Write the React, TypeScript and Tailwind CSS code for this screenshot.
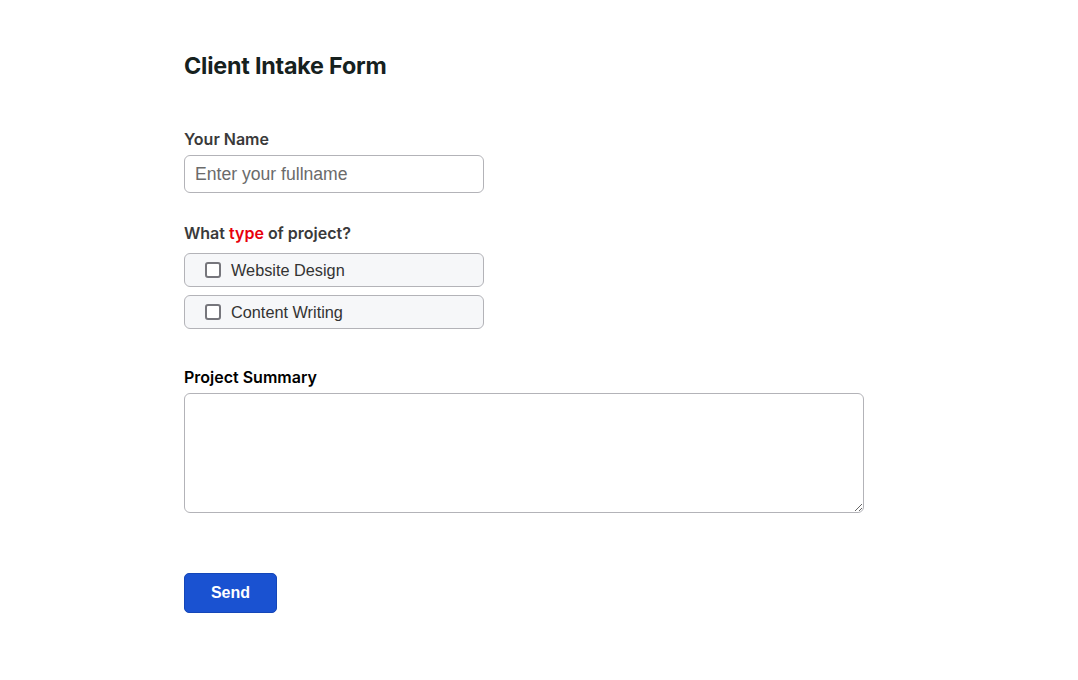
export default function App() {
  return (
    <div className="min-h-screen bg-white font-['Inter',sans-serif]">
      <form className="pl-[184px] pt-[51px] flex flex-col" onSubmit={(e) => e.preventDefault()}>
        <h1 className="text-[23.3px] leading-[30px] font-bold text-[#16211e] tracking-[-0.2px]">Client Intake Form</h1>

        <label className="mt-[48px] text-[16px] leading-[20px] font-semibold text-[#3a3a3a]">Your Name</label>
        <input
          type="text"
          placeholder="Enter your fullname"
          className="mt-[6px] w-[300px] h-[38px] rounded-[6px] border border-[#b3b3b8] px-[10px] text-[17.6px] font-['Liberation_Sans',sans-serif] text-[#333] placeholder:text-[#6b6b6b] outline-none"
        />

        <p className="mt-[30px] text-[16px] leading-[20px] font-semibold text-[#3a3a3a]">
          What <span className="text-[#e8000b]">type</span> of project?
        </p>
        <div className="mt-[10px] flex flex-col gap-[8px]">
          {['Website Design', 'Content Writing'].map((t) => (
            <label
              key={t}
              className="w-[300px] h-[34px] rounded-[6px] border border-[#b3b3b8] bg-[#f6f7f9] flex items-center pl-[20px] gap-[10px] font-['Liberation_Sans',sans-serif] text-[16.3px] text-[#333]"
            >
              <span className="w-[16px] h-[16px] rounded-[3px] border-2 border-[#76767c] bg-white" />
              {t}
            </label>
          ))}
        </div>

        <label className="mt-[38px] text-[16px] leading-[20px] font-semibold text-black">Project Summary</label>
        <textarea className="mt-[6px] w-[680px] h-[120px] rounded-[6px] border border-[#b3b3b8] outline-none p-2" />

        <div className="mt-[60px]">
          <button
            type="submit"
            className="w-[93px] h-[40px] rounded-[5px] bg-[#1a52d1] border border-[#1446b8] text-white text-[16px] font-bold font-['Liberation_Sans',sans-serif]"
          >
            Send
          </button>
        </div>
      </form>
    </div>
  );
}
